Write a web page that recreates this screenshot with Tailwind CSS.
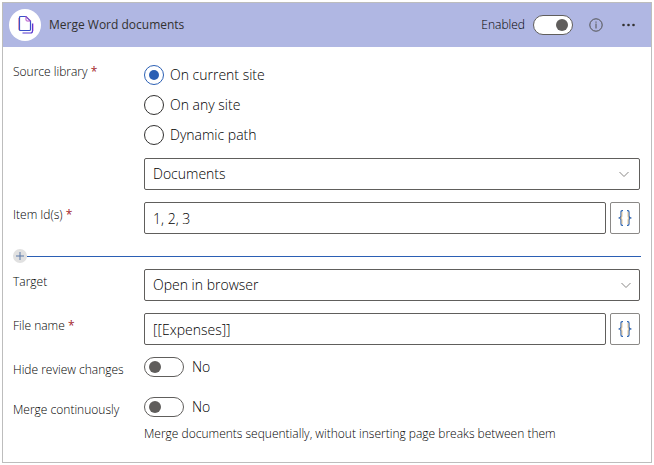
<!doctype html>
<html lang="en">
  <head>
    <meta charset="UTF-8" />
    <meta name="viewport" content="width=device-width, initial-scale=1.0" />
    <title>Merge Word documents</title>
    <script src="https://cdn.jsdelivr.net/npm/@tailwindcss/browser@4"></script>
  </head>

  <body class="bg-white p-0.5 font-['Open_Sans',sans-serif] text-xs font-light text-black">
    <form class="border border-[#bdbdbd]">
      <!-- Header -->
      <header class="flex h-11 items-center bg-[#b0b7e3] pr-3.5 pl-1.5">
        <span class="flex size-8 items-center justify-center rounded-full bg-white">
          <svg class="size-5" viewBox="0 0 20 20" fill="none">
            <path d="M3.500 3v11q0 1.500 1.500 1.500" stroke="#f0a3b8" />
            <path d="M4.500 2.500q0-1 1-1H11l4.500 4.500v8.500q0 1-1 1h-9q-1 0-1-1z" stroke="#3a50c8" stroke-width="1.2" />
            <path d="M11 1.500V5q0 1 1 1h3.500M11 1.500l4.500 4.500" stroke="#b04fc8" />
            <path d="M17.500 8.500V16q0 2-2 2H7.500" stroke="#5a3ad0" stroke-width="1.2" />
            <path d="M18.500 8.500V16" stroke="#d98ae0" stroke-width=".6" />
          </svg>
        </span>
        <h1 class="ml-2 text-xs font-medium text-[#323130]">Merge Word documents</h1>
        <label for="enabled" class="ml-auto">Enabled</label>
        <input
          type="checkbox"
          role="switch"
          id="enabled"
          checked
          class="ml-2 flex h-5 w-10 appearance-none items-center rounded-full border border-[#605e5c] bg-white px-1 before:size-3 before:rounded-full before:bg-[#605e5c] checked:justify-end"
        />
        <button type="button" aria-label="Information" class="ml-4">
          <svg class="size-3.5" viewBox="0 0 14 14" fill="none" stroke="#505050">
            <circle cx="7" cy="7" r="6.2" />
            <path d="M7 5.500v5M7 3.500v1.200" />
          </svg>
        </button>
        <button type="button" aria-label="More actions" class="ml-[18px]">
          <svg class="size-4" viewBox="0 0 16 16" fill="#323130">
            <circle cx="2.5" cy="8" r="1.300" />
            <circle cx="7.500" cy="8" r="1.300" />
            <circle cx="12.500" cy="8" r="1.300" />
          </svg>
        </button>
      </header>

      <div class="pt-4 pr-[11px] pb-5 pl-2.5">
        <!-- Source -->
        <div class="grid grid-cols-[131px_1fr] gap-y-3">
          <span id="source-label" class="pt-px">Source library <span class="font-normal text-[#a4262c]">*</span></span>
          <div class="pt-0.5">
            <div role="radiogroup" aria-labelledby="source-label" class="flex flex-col gap-2.5 text-sm">
              <label class="flex h-5 items-center gap-1.5">
                <input
                  type="radio"
                  name="source"
                  checked
                  class="flex size-5 appearance-none items-center justify-center rounded-full border border-[#323130] before:size-2.5 before:rounded-full checked:border-[#2b5fb4] checked:before:bg-[#2b5fb4]"
                />
                On current site
              </label>
              <label class="flex h-5 items-center gap-1.5">
                <input
                  type="radio"
                  name="source"
                  class="flex size-5 appearance-none items-center justify-center rounded-full border border-[#323130] before:size-2.5 before:rounded-full checked:border-[#2b5fb4] checked:before:bg-[#2b5fb4]"
                />
                On any site
              </label>
              <label class="flex h-5 items-center gap-1.5">
                <input
                  type="radio"
                  name="source"
                  class="flex size-5 appearance-none items-center justify-center rounded-full border border-[#323130] before:size-2.5 before:rounded-full checked:border-[#2b5fb4] checked:before:bg-[#2b5fb4]"
                />
                Dynamic path
              </label>
            </div>
            <div class="relative mt-[13px]">
              <select
                aria-label="Library"
                class="h-8 w-full appearance-none rounded-xs border border-[#605e5c] bg-white px-2 text-sm"
              >
                <option>Documents</option>
              </select>
              <svg class="pointer-events-none absolute top-2.5 right-2.5 size-3" viewBox="0 0 12 12" fill="none" stroke="#8a8886">
                <path d="M1.500 4 6 8.500 10.500 4" />
              </svg>
            </div>
          </div>

          <label for="item-ids" class="pt-[5px]">Item Id(s) <span class="font-normal text-[#a4262c]">*</span></label>
          <div class="flex gap-1">
            <input
              type="text"
              id="item-ids"
              value="1, 2, 3"
              class="h-8 min-w-0 flex-1 rounded-xs border border-[#605e5c] px-2 text-sm"
            />
            <button
              type="button"
              aria-label="Insert token"
              class="flex h-8 w-[30px] items-center justify-center rounded-xs border border-[#8a8886]"
            >
              <svg class="size-4" viewBox="0 0 16 16" fill="none" stroke-width="1.2">
                <path d="M6 .7H5.200Q4 .7 4 2v4Q4 8 1.500 8 4 8 4 10v4q0 1.300 1.200 1.300H6" stroke="#2f64b0" />
                <path d="M10 .7h.8Q12 .7 12 2v4q0 2 2.500 2-2.500 0-2.500 2v4q0 1.300-1.200 1.300H10" stroke="#2f64b0" />
                <path d="M5 2v4Q5 8 3.500 8 5 8 5 10v4M11 2v4q0 2 1 2-1 0-1 2v4" stroke="#e3b877" stroke-width=".8" />
              </svg>
            </button>
          </div>
        </div>

        <!-- Divider -->
        <div class="mt-[15px] -mr-px mb-1.5 flex items-center">
          <button
            type="button"
            aria-label="Add parameter"
            class="flex size-3.5 items-center justify-center rounded-full bg-[#e1e1e1]"
          >
            <svg class="size-2.5" viewBox="0 0 10 10" stroke="#5b78a8">
              <path d="M5 1v8M1 5h8" />
            </svg>
          </button>
          <div role="separator" class="h-px flex-1 bg-[#2b5fb4]"></div>
        </div>

        <!-- Target -->
        <div class="grid grid-cols-[131px_1fr] gap-y-3">
          <label for="target" class="pt-[5px]">Target</label>
          <div class="relative">
            <select
              id="target"
              class="h-8 w-full appearance-none rounded-xs border border-[#605e5c] bg-white px-2 text-sm"
            >
              <option>Open in browser</option>
            </select>
            <svg class="pointer-events-none absolute top-2.5 right-2 size-3" viewBox="0 0 12 12" fill="none" stroke="#8a8886">
              <path d="M1.500 4 6 8.500 10.500 4" />
            </svg>
          </div>

          <label for="file-name" class="pt-[5px]">File name <span class="font-normal text-[#a4262c]">*</span></label>
          <div class="flex gap-1">
            <input
              type="text"
              id="file-name"
              value="[[Expenses]]"
              class="h-8 min-w-0 flex-1 rounded-xs border border-[#605e5c] px-2 text-sm"
            />
            <button
              type="button"
              aria-label="Insert token"
              class="flex h-8 w-[30px] items-center justify-center rounded-xs border border-[#8a8886]"
            >
              <svg class="size-4" viewBox="0 0 16 16" fill="none" stroke-width="1.2">
                <path d="M6 .7H5.200Q4 .7 4 2v4Q4 8 1.500 8 4 8 4 10v4q0 1.300 1.200 1.300H6" stroke="#2f64b0" />
                <path d="M10 .7h.8Q12 .7 12 2v4q0 2 2.500 2-2.500 0-2.500 2v4q0 1.300-1.200 1.300H10" stroke="#2f64b0" />
                <path d="M5 2v4Q5 8 3.500 8 5 8 5 10v4M11 2v4q0 2 1 2-1 0-1 2v4" stroke="#e3b877" stroke-width=".8" />
              </svg>
            </button>
          </div>
        </div>

        <!-- Options -->
        <div class="mt-3 grid grid-cols-[131px_1fr] gap-y-5">
          <label for="hide-changes" class="h-5 pt-[5px]">Hide review changes</label>
          <div class="flex h-5 items-center gap-2 text-sm">
            <input
              type="checkbox"
              role="switch"
              id="hide-changes"
              class="flex h-5 w-10 appearance-none items-center rounded-full border border-[#605e5c] bg-white px-1 before:size-3 before:rounded-full before:bg-[#605e5c] checked:justify-end"
            />
            No
          </div>

          <label for="merge" class="pt-[5px]">Merge continuously</label>
          <div>
            <div class="flex h-5 items-center gap-2 text-sm">
              <input
                type="checkbox"
                role="switch"
                id="merge"
                class="flex h-5 w-10 appearance-none items-center rounded-full border border-[#605e5c] bg-white px-1 before:size-3 before:rounded-full before:bg-[#605e5c] checked:justify-end"
              />
              No
            </div>
            <p class="mt-[9px]">Merge documents sequentially, without inserting page breaks between them</p>
          </div>
        </div>
      </div>
    </form>
  </body>
</html>
